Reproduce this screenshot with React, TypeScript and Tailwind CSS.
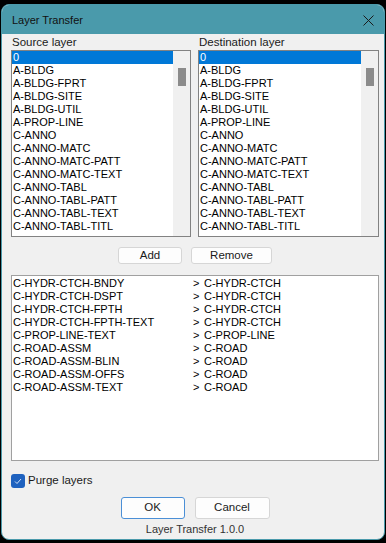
import React from 'react';

// ---------------------------------------------------------------------------
// Data
// ---------------------------------------------------------------------------
const LAYERS = [
  '0',
  'A-BLDG',
  'A-BLDG-FPRT',
  'A-BLDG-SITE',
  'A-BLDG-UTIL',
  'A-PROP-LINE',
  'C-ANNO',
  'C-ANNO-MATC',
  'C-ANNO-MATC-PATT',
  'C-ANNO-MATC-TEXT',
  'C-ANNO-TABL',
  'C-ANNO-TABL-PATT',
  'C-ANNO-TABL-TEXT',
  'C-ANNO-TABL-TITL',
];

const MAPPINGS: [string, string][] = [
  ['C-HYDR-CTCH-BNDY', 'C-HYDR-CTCH'],
  ['C-HYDR-CTCH-DSPT', 'C-HYDR-CTCH'],
  ['C-HYDR-CTCH-FPTH', 'C-HYDR-CTCH'],
  ['C-HYDR-CTCH-FPTH-TEXT', 'C-HYDR-CTCH'],
  ['C-PROP-LINE-TEXT', 'C-PROP-LINE'],
  ['C-ROAD-ASSM', 'C-ROAD'],
  ['C-ROAD-ASSM-BLIN', 'C-ROAD'],
  ['C-ROAD-ASSM-OFFS', 'C-ROAD'],
  ['C-ROAD-ASSM-TEXT', 'C-ROAD'],
];

const font = "font-['Liberation_Sans',Arial,sans-serif]";

// ---------------------------------------------------------------------------
// LayerList — listbox with a selected first row and a fake scrollbar
// ---------------------------------------------------------------------------
function LayerList({ label, width }: { label: string; width: string }) {
  return (
    <div className={`${width} flex flex-col`}>
      <div className="h-[16px] text-[11.5px] leading-[16px] text-[#1a1a1a] pl-[1px]">{label}</div>
      <div className="h-[187px] border border-[#828282] bg-white flex overflow-hidden">
        <div className="flex-1">
          {LAYERS.map((l, i) => (
            <div
              key={l}
              className={`h-[13px] leading-[13px] text-[11px] pl-[1px] whitespace-nowrap ${
                i === 0 ? 'bg-[#0078d7] text-white' : 'text-black'
              }`}
            >
              {l}
            </div>
          ))}
        </div>
        <div className="w-[17px] bg-[#f0f0f0] pt-[17px] flex justify-center">
          <div className="w-[8px] h-[18px] bg-[#8b8b8b]" />
        </div>
      </div>
    </div>
  );
}

function Button({ children, className = '', primary = false }: { children: React.ReactNode; className?: string; primary?: boolean }) {
  return (
    <button
      className={`flex items-center justify-center rounded-[3px] bg-[#fdfdfd] text-[11.5px] text-[#1a1a1a] border ${
        primary ? 'border-[#4b8fd6]' : 'border-[#d6d6d6]'
      } ${className}`}
    >
      {children}
    </button>
  );
}

export default function App() {
  return (
    <div className={`w-[386px] h-[543px] bg-black pt-[4px] pl-[1px] ${font}`}>
      <div className="w-[384px] h-[536px] rounded-[8px] border border-[#4a9aab] bg-[#f0f0f0] overflow-hidden flex flex-col">
        {/* Title bar */}
        <div className="h-[29px] shrink-0 bg-[#4a9aab] flex items-center justify-between pl-[10px] pr-[10px]">
          <span className="text-[11px] text-[#111] pt-[1px]">Layer Transfer</span>
          <svg width="11" height="11" viewBox="0 0 11 11" className="mt-[1px]">
            <path d="M0.5 0.5 L10.5 10.5 M10.5 0.5 L0.5 10.5" stroke="#1a1a1a" strokeWidth="1" fill="none" />
          </svg>
        </div>

        {/* Body */}
        <div className="flex flex-col pl-[9px] pr-[5px]">
          <div className="flex gap-[7px]">
            <LayerList label="Source layer" width="w-[180px]" />
            <LayerList label="Destination layer" width="w-[181px]" />
          </div>

          <div className="flex justify-center gap-[9px] mt-[10px]">
            <Button className="w-[64px] h-[17px]">Add</Button>
            <Button className="w-[81px] h-[17px]">Remove</Button>
          </div>

          <div className="mt-[11px] h-[186px] border border-[#a0a0a0] bg-white pt-[1px]">
            {MAPPINGS.map(([src, dst]) => (
              <div key={src} className="h-[13px] leading-[13px] text-[11px] text-black flex whitespace-nowrap">
                <span className="w-[181px] pl-[1px]">{src}</span>
                <span className="w-[11px]">&gt;</span>
                <span>{dst}</span>
              </div>
            ))}
          </div>

          <label className="mt-[13px] flex items-center gap-[3px] h-[14px]">
            <span className="w-[14px] h-[14px] rounded-[3px] bg-[#1f62bf] flex items-center justify-center">
              <svg width="8" height="7" viewBox="0 0 8 7">
                <path d="M1 3.5 L3 5.5 L7 1" stroke="#cfe0f7" strokeWidth="1" fill="none" />
              </svg>
            </span>
            <span className="text-[11.5px] text-[#1a1a1a]">Purge layers</span>
          </label>

          <div className="flex justify-center gap-[10px] mt-[9px]">
            <Button primary className="w-[64px] h-[22px]">OK</Button>
            <Button className="w-[75px] h-[22px]">Cancel</Button>
          </div>

          <div className="text-center text-[11px] text-[#333] mt-[3px] leading-[14px]">Layer Transfer 1.0.0</div>
        </div>
      </div>
    </div>
  );
}
